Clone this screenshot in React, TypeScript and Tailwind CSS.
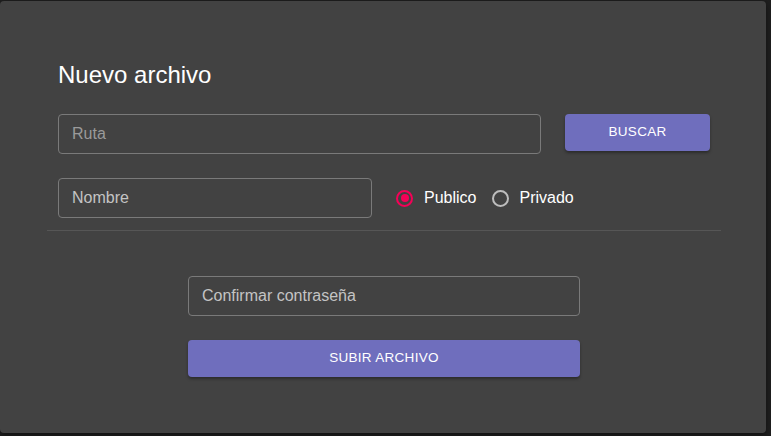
export default function App() {
  return (
    <div className="h-[436px] w-[771px] bg-[#1f1f1f] pt-px" style={{ fontFamily: '"Liberation Sans", Arial, sans-serif' }}>
      <div className="h-[432px] w-[766px] rounded-[4px] bg-[#424242] px-[47px] pt-[59px] shadow-[0_2px_6px_rgba(0,0,0,0.5)]">
        <h2 className="ml-[11px] text-[24px] leading-[30px] text-white">Nuevo archivo</h2>

        <div className="mt-[24px] flex items-start pl-[11px]">
          <input
            placeholder="Ruta"
            className="h-[40px] w-[483px] rounded-[4px] border border-[#7a7a7a] bg-transparent px-[13px] text-[16px] text-white outline-none placeholder:text-[#9a9a9a]"
          />
          <button className="ml-[24px] h-[37px] w-[145px] rounded-[4px] bg-[#6f6ebd] text-[13.5px] tracking-[0.3px] text-white shadow-[0_2px_3px_rgba(0,0,0,0.35)]">
            BUSCAR
          </button>
        </div>

        <div className="mt-[24px] flex items-center pl-[11px]">
          <input
            placeholder="Nombre"
            className="h-[40px] w-[314px] rounded-[4px] border border-[#7a7a7a] bg-transparent px-[13px] text-[16px] text-white outline-none placeholder:text-[#c4c4c4]"
          />
          <label className="ml-[24px] flex items-center gap-[11px] text-[16px] text-white">
            <span className="flex h-[17px] w-[17px] items-center justify-center rounded-full border-2 border-[#f50057]">
              <span className="h-[8px] w-[8px] rounded-full bg-[#f50057]" />
            </span>
            Publico
          </label>
          <label className="ml-[16px] flex items-center gap-[10px] text-[16px] text-white">
            <span className="h-[17px] w-[17px] rounded-full border-2 border-[#bdbdbd]" />
            Privado
          </label>
        </div>

        <div className="mt-[12px] h-px w-[674px] bg-[#565656]" />

        <div className="mt-[45px] flex flex-col items-center pl-[2px]">
          <input
            placeholder="Confirmar contraseña"
            className="h-[40px] w-[392px] rounded-[4px] border border-[#7a7a7a] bg-transparent px-[13px] text-[16px] text-white outline-none placeholder:text-[#c4c4c4]"
          />
          <button className="mt-[24px] h-[37px] w-[392px] rounded-[4px] bg-[#6f6ebd] text-[13.5px] tracking-[0.3px] text-white shadow-[0_2px_3px_rgba(0,0,0,0.35)]">
            SUBIR ARCHIVO
          </button>
        </div>
      </div>
    </div>
  );
}
